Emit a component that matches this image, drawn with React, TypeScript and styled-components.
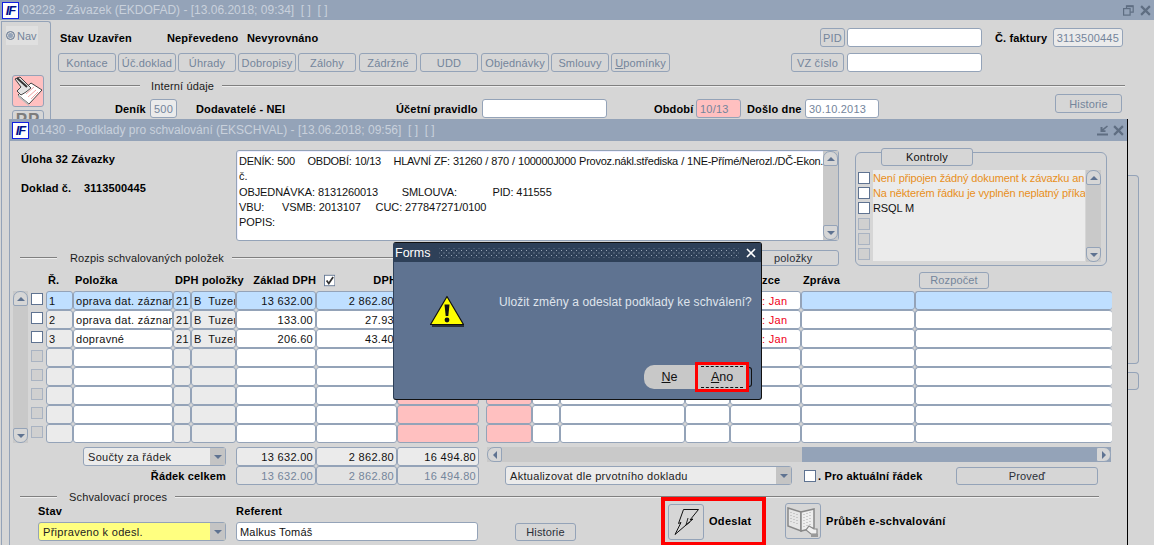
import React from "react";
import styled, { createGlobalStyle } from "styled-components";

const slate = "#94a3b8";

const GlobalStyle = createGlobalStyle`
  html, body { margin: 0; padding: 0; background: #d6d6d6; }
  body { font-family: "Liberation Sans", Arial, sans-serif; font-size: 11px; color: #000; }
  * { box-sizing: border-box; }
`;

const Screen = styled.div`
  position: relative;
  width: 1154px;
  height: 545px;
  overflow: hidden;
  background: #d6d6d6;
`;

/* window chrome */
const TitleBar = styled.div<{ $h: number }>`
  height: ${(p) => p.$h}px;
  background: ${slate};
  display: flex;
  align-items: center;
  padding: 0 3px 0 2px;
  flex: none;
`;
const Logo = styled.span`
  width: 17px;
  height: 17px;
  border: 1px solid #1020e0;
  background: #fff;
  color: #00108a;
  font: italic bold 13px/15px "Liberation Sans", sans-serif;
  letter-spacing: -1px;
  text-align: center;
  overflow: hidden;
  flex: none;
`;
const TitleText = styled.span`
  margin-left: 3px;
  color: #c9d1dc;
  font-size: 12px;
  white-space: pre;
  flex: 1;
`;
const WinIcons = styled.span<{ $gap: number }>`
  display: flex;
  gap: ${(p) => p.$gap}px;
  align-items: center;
`;

const OuterBody = styled.div`
  display: flex;
  height: 525px;
`;
const NavPanel = styled.div`
  width: 50px;
  margin: 1px 0 0 1px;
  border: 1px solid ${slate};
  border-bottom: none;
  border-radius: 0 3px 0 0;
  flex: none;
`;
const NavToggle = styled.div`
  width: 32px;
  height: 19px;
  margin: 4px 0 0 4px;
  background: #e0e0e0;
  display: flex;
  align-items: center;
  gap: 2px;
  color: #74859b;
`;
const Radio = styled.span`
  width: 9px;
  height: 9px;
  border-radius: 50%;
  background: ${slate};
  border: 1px solid #6f7f96;
  box-shadow: inset 0 0 0 1px #d6d6d6;
  flex: none;
`;
const NavIcon = styled.div<{ $pink?: boolean }>`
  width: 32px;
  height: 32px;
  margin: ${(p) => (p.$pink ? "30px" : "3px")} 0 0 10px;
  border: 1px solid ${slate};
  border-radius: 3px;
  background: ${(p) => (p.$pink ? "#ffc0c0" : "#d6d6d6")};
  color: #7d7d7d;
  font: bold 17px/18px "Liberation Sans", sans-serif;
  text-align: center;
  letter-spacing: 1px;
  overflow: hidden;
`;
const OuterForm = styled.div`
  width: 1076px;
  padding: 8px 2px 0 9px;
  flex: none;
`;
const FormRow = styled.div<{ $mt?: number; $h?: number; $ml?: number }>`
  display: flex;
  align-items: center;
  height: ${(p) => p.$h ?? 19}px;
  margin-top: ${(p) => p.$mt ?? 0}px;
  margin-left: ${(p) => p.$ml ?? 0}px;
`;
const Label = styled.span<{ $w?: number; $ml?: number; $normal?: boolean }>`
  width: ${(p) => (p.$w ? `${p.$w}px` : "auto")};
  margin-left: ${(p) => p.$ml ?? 0}px;
  font-weight: ${(p) => (p.$normal ? 400 : 700)};
  letter-spacing: 0.15px;
  white-space: pre;
  flex: none;
`;
const Btn = styled.div<{ $w: number; $h?: number; $ml?: number; $mt?: number; $dark?: boolean; $align?: string }>`
  width: ${(p) => p.$w}px;
  height: ${(p) => p.$h ?? 19}px;
  margin-left: ${(p) => p.$ml ?? 0}px;
  margin-top: ${(p) => p.$mt ?? 0}px;
  border: 1px solid ${slate};
  border-radius: 3px;
  color: ${(p) => (p.$dark ? "#2a2f38" : "#74859b")};
  font-weight: 400;
  display: flex;
  align-items: center;
  justify-content: ${(p) => p.$align ?? "center"};
  white-space: pre;
  letter-spacing: 0.15px;
  flex: none;
  u { text-underline-offset: 1px; }
`;
const Field = styled.div<{ $w: number; $bg?: string; $color?: string; $ml?: number; $right?: boolean; $h?: number }>`
  width: ${(p) => p.$w}px;
  height: ${(p) => p.$h ?? 19}px;
  margin-left: ${(p) => p.$ml ?? 0}px;
  border: 1px solid ${slate};
  border-radius: 3px;
  background: ${(p) => p.$bg ?? "#fff"};
  color: ${(p) => p.$color ?? "#74859b"};
  display: flex;
  align-items: center;
  justify-content: ${(p) => (p.$right ? "flex-end" : "flex-start")};
  padding: 0 3px;
  letter-spacing: 0.2px;
  white-space: pre;
  flex: none;
`;
const Section = styled.div<{ $h: number; $lead: number; $mb?: number }>`
  display: flex;
  align-items: center;
  height: ${(p) => p.$h}px;
  margin-bottom: ${(p) => p.$mb ?? 0}px;
  padding-left: ${(p) => p.$lead}px;
`;
const Rule = styled.span<{ $w?: number }>`
  height: 1px;
  background: #808080;
  border-bottom: 1px solid #eee;
  box-sizing: content-box;
  width: ${(p) => (p.$w ? `${p.$w}px` : "auto")};
  flex: ${(p) => (p.$w ? "none" : "1")};
`;
const SectionText = styled.span<{ $gap: number }>`
  margin: 0 8px 0 ${(p) => p.$gap}px;
  letter-spacing: 0.15px;
  color: #1a1a1a;
`;
const RuleEnd = styled.span`
  width: 28px;
  flex: none;
`;
const RightStrip = styled.div`
  flex: none;
  width: 26px;
  padding: 155px 14px 0 1px;
`;
const StubBox = styled.div<{ $h: number; $mt?: number }>`
  height: ${(p) => p.$h}px;
  margin-top: ${(p) => p.$mt ?? 0}px;
  border: 1px solid ${slate};
  border-left: none;
  border-radius: 0 4px 4px 0;
  background: #d0d0d0;
`;

/* inner window */
const InnerWindow = styled.div`
  position: absolute;
  left: 9px;
  top: 119px;
  width: 1119px;
  height: 426px;
  background: #d6d6d6;
  border-left: 1px solid ${slate};
  border-right: 1px solid #000;
  display: flex;
  flex-direction: column;
`;
const TopArea = styled.div`
  display: flex;
  padding-top: 7px;
  height: 125px;
  flex: none;
`;
const TopLeft = styled.div`
  width: 845px;
  flex: none;
  padding-right: 16px;
`;
const TopRow = styled.div`
  display: flex;
  height: 93px;
  margin-bottom: 8px;
`;
const InfoCol = styled.div`
  width: 226px;
  padding: 4px 0 0 11px;
  flex: none;
`;
const InfoLine = styled.div<{ $mt?: number }>`
  display: flex;
  height: 14px;
  align-items: center;
  margin-top: ${(p) => p.$mt ?? 0}px;
`;
const TextPane = styled.div`
  width: 603px;
  height: 91px;
  margin-top: 2px;
  border: 1px solid ${slate};
  border-radius: 3px;
  background: #fff;
  display: flex;
  flex: none;
  box-shadow: inset 1px 1px 0 #eef;
`;
const PaneText = styled.div`
  flex: 1;
  padding: 3px 0 0 2px;
  line-height: 15.3px;
  letter-spacing: -0.1px;
  white-space: pre;
  overflow: hidden;
  color: #111;
`;
const PaneFirstLine = styled.span`
  letter-spacing: -0.27px;
  word-spacing: 0.4px;
`;
const VScroll = styled.div<{ $w?: number }>`
  width: ${(p) => p.$w ?? 15}px;
  background: #c9c9c9;
  display: flex;
  flex-direction: column;
  justify-content: space-between;
  flex: none;
`;
const ArrowBtn = styled.div<{ $dir: "up" | "down" | "left" | "right" }>`
  width: 15px;
  height: 15px;
  border: 1px solid ${slate};
  border-radius: ${(p) =>
    p.$dir === "up" ? "7px 7px 2px 2px" : p.$dir === "down" ? "2px 2px 7px 7px" : p.$dir === "left" ? "7px 2px 2px 7px" : "2px 7px 7px 2px"};
  background: #d6d6d6;
  display: flex;
  align-items: center;
  justify-content: center;
  flex: none;
  &::after {
    content: "";
    border-style: solid;
    border-color: transparent;
    ${(p) =>
      p.$dir === "up"
        ? "border-width: 0 4px 4px; border-bottom-color: #5f7391;"
        : p.$dir === "down"
          ? "border-width: 4px 4px 0; border-top-color: #5f7391;"
          : p.$dir === "left"
            ? "border-width: 4px 4px 4px 0; border-right-color: #5f7391;"
            : "border-width: 4px 0 4px 4px; border-left-color: #5f7391;"}
  }
`;
const KontrolyGroup = styled.div`
  position: relative;
  width: 252px;
  height: 114px;
  margin-top: 4px;
  border: 1px solid ${slate};
  border-radius: 6px;
  display: flex;
  padding: 17px 5px 3px 2px;
  flex: none;
`;
const KontrolyBtn = styled.div`
  position: absolute;
  left: 25px;
  top: -5px;
  width: 92px;
  height: 18px;
  background: #d6d6d6;
  border: 1px solid ${slate};
  border-radius: 3px;
  display: flex;
  align-items: center;
  justify-content: center;
  color: #111;
  letter-spacing: 0.2px;
`;
const KontrolyList = styled.div`
  flex: 1;
  display: grid;
  grid-auto-rows: 15.2px;
`;
const KontrolyRow = styled.div`
  display: flex;
  gap: 3px;
  height: 15.2px;
`;
const Check = styled.span<{ $off?: boolean; $on?: boolean }>`
  width: 12px;
  height: 12px;
  margin-top: 2px;
  background: ${(p) => (p.$off ? "#d0d0d0" : "#fff")};
  border: 1px solid ${(p) => (p.$off ? "#a9b3c2" : "#5f7391")};
  display: flex;
  flex: none;
`;
const KontrolyText = styled.span<{ $warn?: boolean }>`
  width: 212px;
  background: #ebebeb;
  color: ${(p) => (p.$warn ? "#e88f22" : "#111")};
  letter-spacing: -0.13px;
  white-space: pre;
  overflow: hidden;
  line-height: 16px;
  flex: none;
`;

/* table */
const COLS = [27, 100, 18, 45, 80, 81, 82, 7, 46, 28, 125, 45, 71, 114, 197];
const TableArea = styled.div`
  display: flex;
  padding: 0 0 0 3px;
  height: 177px;
  flex: none;
`;
const TableSide = styled.div`
  width: 33px;
  padding-top: 25px;
  display: flex;
  gap: 3px;
  flex: none;
`;
const SideChecks = styled.div`
  display: grid;
  grid-auto-rows: 19px;
  width: 12px;
`;
const HeadRow = styled.div`
  display: grid;
  grid-template-columns: ${COLS.map((c) => `${c}px`).join(" ")};
  height: 25px;
  align-items: center;
  padding-top: 3px;
`;
const HeadCell = styled.span<{ $right?: boolean; $pad?: number; $wide?: boolean }>`
  font-weight: 700;
  letter-spacing: 0.15px;
  white-space: pre;
  padding-left: ${(p) => p.$pad ?? 2}px;
  display: flex;
  align-items: center;
  gap: 4px;
  justify-content: ${(p) => (p.$right ? "flex-end" : "flex-start")};
  ${(p) => (p.$wide ? "grid-column: 3 / 5;" : "")}
`;
const DphHead = styled.span`
  margin-left: 34px;
`;
const Grid = styled.div`
  display: grid;
  grid-template-columns: ${COLS.map((c) => `${c}px`).join(" ")};
  grid-auto-rows: 19px;
`;
const Cell = styled.div<{ $bg?: string; $right?: boolean; $none?: boolean; $open?: boolean; $color?: string; $pad?: number }>`
  border: ${(p) => (p.$none ? "none" : `1px solid ${slate}`)};
  ${(p) => (p.$open ? "border-right: none;" : "")}
  border-radius: 3px;
  background: ${(p) => (p.$none ? "transparent" : p.$bg ?? "#fff")};
  color: ${(p) => p.$color ?? "#111"};
  display: flex;
  align-items: center;
  justify-content: ${(p) => (p.$right ? "flex-end" : "flex-start")};
  padding: 0 2px 0 ${(p) => p.$pad ?? 2}px;
  letter-spacing: 0.3px;
  white-space: pre;
  overflow: hidden;
`;

/* totals */
const TotalsArea = styled.div`
  display: flex;
  margin-top: 4px;
  height: 38px;
  flex: none;
`;
const TotalsLeft = styled.div`
  width: 469px;
  flex: none;
`;
const TotalsRow = styled.div`
  display: flex;
  align-items: center;
  height: 19px;
  justify-content: flex-end;
`;
const TotalField = styled.div<{ $w: number; $dim?: boolean; $first?: boolean }>`
  width: ${(p) => p.$w}px;
  height: 19px;
  margin-left: ${(p) => (p.$first ? 10 : 0)}px;
  border: 1px solid ${slate};
  border-radius: 3px;
  background: ${(p) => (p.$dim ? "#e2e2e2" : "#ebebeb")};
  color: ${(p) => (p.$dim ? "#74859b" : "#111")};
  display: flex;
  align-items: center;
  justify-content: flex-end;
  padding-right: 2px;
  letter-spacing: 0.3px;
  flex: none;
`;
const TotalsRight = styled.div`
  width: 624px;
  margin-left: 8px;
  flex: none;
`;
const HScroll = styled.div`
  height: 15px;
  background: ${slate};
  display: flex;
  justify-content: space-between;
`;
const HThumb = styled.div`
  display: flex;
  width: 315px;
  background: #c9c9c9;
`;
const SelectBox = styled.div<{ $w: number; $bg?: string; $ml?: number; $color?: string }>`
  width: ${(p) => p.$w}px;
  height: 19px;
  margin-left: ${(p) => p.$ml ?? 0}px;
  border: 1px solid ${slate};
  border-radius: 3px;
  background: ${(p) => p.$bg ?? "#ebebeb"};
  display: flex;
  align-items: center;
  justify-content: space-between;
  padding-left: 4px;
  letter-spacing: 0.3px;
  color: ${(p) => p.$color ?? "#222"};
  white-space: pre;
  flex: none;
`;
const SelectDrop = styled.span`
  width: 15px;
  height: 100%;
  background: #c4c4c4;
  display: flex;
  align-items: center;
  justify-content: center;
  &::after {
    content: "";
    border-style: solid;
    border-width: 4px 4px 0;
    border-color: #5f7391 transparent transparent;
  }
`;
const ActionRow = styled.div`
  display: flex;
  align-items: center;
  height: 19px;
  margin-top: 4px;
`;
const ActionCheck = styled(Check)`
  margin: 0 0 0 12px;
`;

/* bottom */
const BottomRow = styled.div`
  display: flex;
  align-items: flex-start;
  flex: 1;
`;
const StackCol = styled.div<{ $w: number; $ml: number }>`
  width: ${(p) => p.$w}px;
  margin-left: ${(p) => p.$ml}px;
  padding-top: 7px;
  flex: none;
`;
const StackLabel = styled.div`
  font-weight: 700;
  letter-spacing: 0.2px;
  height: 18px;
  line-height: 14px;
`;
const RedBox = styled.div`
  width: 105px;
  height: 48px;
  margin-left: 85px;
  border: 4px solid #f00;
  border-bottom-width: 3px;
  display: flex;
  align-items: center;
  padding-left: 3px;
  flex: none;
`;
const IconBtn = styled.div<{ $ml?: number; $mt?: number }>`
  width: 36px;
  height: 36px;
  margin-left: ${(p) => p.$ml ?? 0}px;
  margin-top: ${(p) => p.$mt ?? 0}px;
  border: 1px solid ${slate};
  border-radius: 3px;
  display: flex;
  align-items: center;
  justify-content: center;
  flex: none;
`;
const BtnCaption = styled.span<{ $mt?: number }>`
  font-weight: 700;
  letter-spacing: 0.3px;
  margin-left: 5px;
  margin-top: ${(p) => p.$mt ?? 0}px;
  white-space: pre;
  flex: none;
`;

/* dialog */
const Dialog = styled.div`
  position: absolute;
  left: 393px;
  top: 242px;
  width: 369px;
  height: 158px;
  background: #5f7391;
  border: 1px solid #111;
  border-left-color: #2e4058;
  border-radius: 3px;
  display: flex;
  flex-direction: column;
`;
const DialogBar = styled.div`
  height: 19px;
  background: #2e4058;
  display: flex;
  align-items: center;
  padding: 0 0 0 1px;
  color: #fff;
  font-size: 12.5px;
`;
const DotStrip = styled.span`
  width: 300px;
  height: 10px;
  margin: 0 7px 0 9px;
  background-image: radial-gradient(#9aa7b8 0.7px, transparent 0.9px), radial-gradient(#9aa7b8 0.7px, transparent 0.9px);
  background-size: 5px 5px;
  background-position: 0 0, 2.5px 2.5px;
  flex: none;
`;
const DialogBody = styled.div`
  display: flex;
  height: 58px;
  padding: 33px 0 0 35px;
  flex: none;
`;
const DialogMsg = styled.div`
  margin: 0 0 0 34px;
  color: #dfe4ec;
  font-size: 12px;
  letter-spacing: 0.09px;
  white-space: pre;
`;
const DialogBtns = styled.div`
  display: flex;
  align-items: center;
  margin: 42px 0 0 250px;
  height: 30px;
  position: relative;
`;
const PillNe = styled.div`
  width: 51px;
  height: 24px;
  background: #c8c8c8;
  border-radius: 10px 0 0 10px;
  display: flex;
  align-items: center;
  justify-content: center;
  font-size: 12.5px;
  color: #111;
`;
const AnoFrame = styled.div`
  width: 54px;
  height: 30px;
  border: 3px solid #f00;
  background: #c8c8c8;
  display: flex;
  align-items: center;
  justify-content: center;
  font-size: 12.5px;
  color: #111;
  position: relative;
  &::before {
    content: "";
    position: absolute;
    left: 3px;
    right: 3px;
    top: 1px;
    bottom: 1px;
    border-top: 1px dashed #111;
    border-bottom: 1px dashed #111;
  }
`;
const PillEnd = styled.span`
  width: 3px;
  height: 20px;
  border: 1px solid #111;
  border-left: none;
  border-radius: 0 4px 4px 0;
  flex: none;
`;

const Close: React.FC<{ size: number; color: string; w?: number }> = ({ size, color, w = 2 }) => (
  <svg width={size} height={size} viewBox="0 0 10 10" style={{ flex: "none" }}>
    <path d="M1 1L9 9M9 1L1 9" stroke={color} strokeWidth={w} fill="none" />
  </svg>
);

const Restore = () => (
  <svg width="11" height="11" viewBox="0 0 11 11" fill="none" stroke="#5f6e82" strokeWidth="1.2">
    <rect x="0.6" y="3.6" width="6.5" height="6.5" />
    <path d="M3.5 3.5V0.8H10.2V7.2H7.2" />
    <path d="M3.5 1.4H10" strokeWidth="1.6" />
  </svg>
);

const Minimize = () => (
  <svg width="11" height="11" viewBox="0 0 11 11" fill="#5f6e82">
    <rect x="0" y="8.5" width="11" height="2" />
    <path d="M10 0.5L5.5 4V2H3.5V7H8.5V5.2H6.5L11 1.5Z" />
  </svg>
);

const NoteIcon = () => (
  <svg width="30" height="30" viewBox="0 0 30 30">
    <path d="M5 19L18 7L29 14L16 28Z" fill="#fff" stroke="#444" strokeWidth="1" />
    <path d="M5 19L16 28L16 30L5 21Z" fill="#bbb" />
    <path d="M13 18L21 11M15 21L23 14M18 23L25 16" stroke="#e99" strokeWidth="0.9" />
    <path d="M2 3L7 1L18 12L13 16L8 19L4 15L8 11Z" fill="#e4e4e4" stroke="#333" strokeWidth="0.9" />
    <path d="M4 2L14 11" stroke="#333" strokeWidth="2" />
  </svg>
);

const BoltIcon = () => (
  <svg width="34" height="34" viewBox="0 0 34 34" fill="none" stroke="#111" strokeWidth="1">
    <path d="M14.5 4.5H29.5L21 15L24 14L6 29.5L12 17.5L9.5 18.5Z" />
    <path d="M19 13L17 20L21 17" strokeWidth="0.9" />
  </svg>
);

const BookIcon = () => (
  <svg width="34" height="34" viewBox="0 0 34 34">
    <path d="M2 4L15 8V27L2 22Z" fill="#e6e6e6" stroke="#888" strokeWidth="1.5" />
    <path d="M15 8L28 5V24L15 27Z" fill="#eee" stroke="#888" strokeWidth="1.5" />
    <path d="M5 8V20M8 9V21M11 10V22M18 10V23M21 9V22M24 8V21" stroke="#aaa" strokeWidth="1" strokeDasharray="1 2" />
    <path d="M23 22L28 25L31 25V30H25L20 26Z" fill="#f0f0f0" stroke="#888" strokeWidth="1.2" />
    <rect x="25" y="30" width="7" height="3" fill="#999" />
  </svg>
);

const WarningIcon = () => (
  <svg width="36" height="32" viewBox="0 0 36 32">
    <path d="M18 1.5L34.5 29.5H1.5Z" fill="#ffff00" stroke="#111" strokeWidth="1.2" strokeLinejoin="round" />
    <path d="M3 31H35" stroke="#111" strokeWidth="1.4" />
    <path d="M15.5 9.5H20.5L19.3 21H16.7Z" fill="#111" />
    <circle cx="18" cy="25" r="2.4" fill="#111" />
  </svg>
);

const TickBox = () => (
  <svg width="13" height="13" viewBox="0 0 13 13">
    <rect x="0.5" y="0.5" width="12" height="12" fill="#fff" stroke="#5f7391" />
    <path d="M3 6.5L5.5 10L10.5 2.5" fill="none" stroke="#333" strokeWidth="2" />
  </svg>
);

type Row = { r: string; item: string; sazba: string; typ: string; zaklad: string; dph: string; celkem: string };

const rows: (Row | null)[] = [
  { r: "1", item: "oprava dat. záznam", sazba: "21", typ: "B  Tuzer", zaklad: "13 632.00", dph: "2 862.80", celkem: "16 494.80" },
  { r: "2", item: "oprava dat. záznam", sazba: "21", typ: "B  Tuzer", zaklad: "133.00", dph: "27.93", celkem: "160.93" },
  { r: "3", item: "dopravné", sazba: "21", typ: "B  Tuzer", zaklad: "206.60", dph: "43.40", celkem: "250.00" },
  null,
  null,
  null,
  null,
  null,
];

const toolbar = [
  { text: "Kontace", w: 58, gap: 0 },
  { text: "Úč.doklad", w: 58, gap: 2 },
  { text: "Úhrady", w: 58, gap: 2 },
  { text: "Dobropisy", w: 58, gap: 2 },
  { text: "Zálohy", w: 58, gap: 2 },
  { text: "Zádržné", w: 58, gap: 3 },
  { text: "UDD", w: 58, gap: 3 },
  { text: "Objednávky", w: 68, gap: 3 },
  { text: "Smlouvy", w: 58, gap: 2 },
];

const App: React.FC = () => {
  return (
    <Screen>
      <GlobalStyle />
      <TitleBar $h={20}>
        <Logo>IF</Logo>
        <TitleText>03228 - Závazek (EKDOFAD) - [13.06.2018; 09:34]  [ ]  [ ]</TitleText>
        <WinIcons $gap={6}>
          <Restore />
          <Close size={11} color="#5f6e82" />
        </WinIcons>
      </TitleBar>
      <OuterBody>
        <NavPanel>
          <NavToggle>
            <Radio />
            Nav
          </NavToggle>
          <NavIcon $pink>
            <NoteIcon />
          </NavIcon>
          <NavIcon>PP</NavIcon>
        </NavPanel>
        <OuterForm>
          <FormRow>
            <Label $w={28}>Stav</Label>
            <Label $w={79}>Uzavřen</Label>
            <Label $w={80}>Nepřevedeno</Label>
            <Label $w={573}>Nevyrovnáno</Label>
            <Btn $w={25}>PID</Btn>
            <Field $w={135} $ml={2} />
            <Label $w={58} $ml={13}>Č. faktury</Label>
            <Field $w={70} $bg="#ebebeb" $right>3113500445</Field>
          </FormRow>
          <FormRow $mt={6} $ml={-2}>
            {toolbar.map((b) => (
              <Btn key={b.text} $w={b.w} $ml={b.gap}>{b.text}</Btn>
            ))}
            <Btn $w={59} $ml={2}><span><u>U</u>pomínky</span></Btn>
            <Btn $w={53} $ml={121}>VZ číslo</Btn>
            <Field $w={135} $ml={3} />
          </FormRow>
          <Section $h={27} $lead={0}>
            <Rule $w={80} />
            <SectionText $gap={11}>Interní údaje</SectionText>
            <Rule />
          </Section>
          <FormRow>
            <Label $w={35} $ml={55}>Deník</Label>
            <Field $w={27} $bg="#ebebeb">500</Field>
            <Label $w={200} $ml={19}>Dodavatelé - NEI</Label>
            <Label $w={86}>Účetní pravidlo</Label>
            <Field $w={125} />
            <Label $w={42} $ml={47}>Období</Label>
            <Field $w={45} $bg="#ffc0c0">10/13</Field>
            <Label $w={58} $ml={6}>Došlo dne</Label>
            <Field $w={74}>30.10.2013</Field>
            <Btn $w={67} $ml={176} $mt={-10}>Historie</Btn>
          </FormRow>
        </OuterForm>
        <RightStrip>
          <StubBox $h={189} />
          <StubBox $h={18} $mt={8} />
        </RightStrip>
      </OuterBody>

      <InnerWindow>
        <TitleBar $h={22}>
          <Logo>IF</Logo>
          <TitleText>01430 - Podklady pro schvalování (EKSCHVAL) - [13.06.2018; 09:56]  [ ]  [ ]</TitleText>
          <WinIcons $gap={5}>
            <Minimize />
            <Close size={11} color="#5f6e82" />
          </WinIcons>
        </TitleBar>

        <TopArea>
          <TopLeft>
            <TopRow>
              <InfoCol>
                <InfoLine><Label>Úloha 32 Závazky</Label></InfoLine>
                <InfoLine $mt={15}>
                  <Label $w={63}>Doklad č.</Label>
                  <Label>3113500445</Label>
                </InfoLine>
              </InfoCol>
              <TextPane>
                <PaneText>
                  <PaneFirstLine>DENÍK: 500    OBDOBÍ: 10/13    HLAVNÍ ZF: 31260 / 870 / 100000J000 Provoz.nákl.střediska / 1NE-Přímé/Nerozl./DČ-Ekon.</PaneFirstLine>
                  {"\nč.\nOBJEDNÁVKA: 8131260013        SMLOUVA:            PID: 411555\nVBU:      VSMB: 2013107     CUC: 277847271/0100\nPOPIS:"}
                </PaneText>
                <VScroll>
                  <ArrowBtn $dir="up" />
                  <ArrowBtn $dir="down" />
                </VScroll>
              </TextPane>
            </TopRow>
            <Section $h={18} $lead={10}>
              <Rule $w={37} />
              <SectionText $gap={13}>Rozpis schvalovaných položek</SectionText>
              <Rule />
              <Btn $w={140} $h={16} $dark $align="flex-end">položky        </Btn>
            </Section>
          </TopLeft>
          <KontrolyGroup>
            <KontrolyBtn>Kontroly</KontrolyBtn>
            <KontrolyList>
              <KontrolyRow><Check /><KontrolyText $warn>Není připojen žádný dokument k závazku an</KontrolyText></KontrolyRow>
              <KontrolyRow><Check /><KontrolyText $warn>Na některém řádku je vyplněn neplatný příka</KontrolyText></KontrolyRow>
              <KontrolyRow><Check /><KontrolyText>RSQL M</KontrolyText></KontrolyRow>
              <KontrolyRow><Check $off /><KontrolyText /></KontrolyRow>
              <KontrolyRow><Check $off /><KontrolyText /></KontrolyRow>
              <KontrolyRow><Check $off /><KontrolyText /></KontrolyRow>
            </KontrolyList>
            <VScroll>
              <ArrowBtn $dir="up" />
              <ArrowBtn $dir="down" />
            </VScroll>
          </KontrolyGroup>
        </TopArea>

        <TableArea>
          <TableSide>
            <VScroll>
              <ArrowBtn $dir="up" />
              <ArrowBtn $dir="down" />
            </VScroll>
            <SideChecks>
              {rows.map((row, i) => (
                <Check key={i} $off={!row} />
              ))}
            </SideChecks>
          </TableSide>
          <div>
            <HeadRow>
              <HeadCell>Ř.</HeadCell>
              <HeadCell>Položka</HeadCell>
              <HeadCell $wide>DPH položky</HeadCell>
              <HeadCell $right>Základ DPH</HeadCell>
              <HeadCell $pad={8}>
                <TickBox />
                <DphHead>DPH</DphHead>
              </HeadCell>
              <HeadCell />
              <HeadCell />
              <HeadCell />
              <HeadCell />
              <HeadCell />
              <HeadCell />
              <HeadCell $pad={32}>zce</HeadCell>
              <HeadCell>Zpráva</HeadCell>
              <HeadCell $pad={4}>
                <Btn $w={70} $h={17}>Rozpočet</Btn>
              </HeadCell>
            </HeadRow>
            <Grid>
              {rows.map((row, i) => {
                const sel = i === 0 ? "#bfdfff" : undefined;
                const grey = sel ?? "#ebebeb";
                const white = sel ?? "#fff";
                return (
                  <React.Fragment key={i}>
                    <Cell $bg={grey}>{row?.r}</Cell>
                    <Cell $bg={white}>{row?.item}</Cell>
                    <Cell $bg={grey}>{row?.sazba}</Cell>
                    <Cell $bg={grey}>{row?.typ}</Cell>
                    <Cell $bg={white} $right>{row?.zaklad}</Cell>
                    <Cell $bg={white} $right>{row?.dph}</Cell>
                    <Cell $bg="#ffc0c0" $right>{row?.celkem}</Cell>
                    <Cell $none />
                    <Cell $bg="#ffc0c0" />
                    <Cell />
                    <Cell />
                    <Cell />
                    <Cell $color="#f00020" $pad={31}>{row ? ": Jan" : ""}</Cell>
                    <Cell $bg={white} />
                    <Cell $bg={white} $open />
                  </React.Fragment>
                );
              })}
            </Grid>
          </div>
        </TableArea>

        <TotalsArea>
          <TotalsLeft>
            <TotalsRow>
              <SelectBox $w={143}>Součty za řádek<SelectDrop /></SelectBox>
              <TotalField $w={80} $first>13 632.00</TotalField>
              <TotalField $w={81}>2 862.80</TotalField>
              <TotalField $w={82}>16 494.80</TotalField>
            </TotalsRow>
            <TotalsRow>
              <Label>Řádek celkem</Label>
              <TotalField $w={80} $dim $first>13 632.00</TotalField>
              <TotalField $w={81} $dim>2 862.80</TotalField>
              <TotalField $w={82} $dim>16 494.80</TotalField>
            </TotalsRow>
          </TotalsLeft>
          <TotalsRight>
            <HScroll>
              <HThumb>
                <ArrowBtn $dir="left" />
              </HThumb>
              <ArrowBtn $dir="right" />
            </HScroll>
            <ActionRow>
              <SelectBox $w={287} $ml={18}>Aktualizovat dle prvotního dokladu<SelectDrop /></SelectBox>
              <ActionCheck />
              <Label $w={138} $ml={2}>. Pro aktuální řádek</Label>
              <Btn $w={142} $h={18} $dark>Proveď</Btn>
            </ActionRow>
          </TotalsRight>
        </TotalsArea>

        <Section $h={24} $lead={10} $mb={-11}>
          <Rule $w={37} />
          <SectionText $gap={12}>Schvalovací proces</SectionText>
          <Rule />
          <RuleEnd />
        </Section>

        <BottomRow>
          <StackCol $w={188} $ml={28}>
            <StackLabel>Stav</StackLabel>
            <SelectBox $w={188} $bg="#ffff80">Připraveno k odesl.<SelectDrop /></SelectBox>
          </StackCol>
          <StackCol $w={242} $ml={10}>
            <StackLabel>Referent</StackLabel>
            <Field $w={242} $color="#111">Malkus Tomáš</Field>
          </StackCol>
          <Btn $w={61} $h={18} $ml={37} $mt={26} $dark>Historie</Btn>
          <RedBox>
            <IconBtn>
              <BoltIcon />
            </IconBtn>
            <BtnCaption $mt={-2}>Odeslat</BtnCaption>
          </RedBox>
          <IconBtn $ml={19} $mt={6}>
            <BookIcon />
          </IconBtn>
          <BtnCaption $mt={18}>Průběh e-schvalování</BtnCaption>
        </BottomRow>
      </InnerWindow>

      <Dialog>
        <DialogBar>
          Forms
          <DotStrip />
          <Close size={10} color="#fff" w={1.6} />
        </DialogBar>
        <DialogBody>
          <WarningIcon />
          <DialogMsg>Uložit změny a odeslat podklady ke schválení?</DialogMsg>
        </DialogBody>
        <DialogBtns>
          <PillNe><span><u>N</u>e</span></PillNe>
          <AnoFrame><span><u>A</u>no</span></AnoFrame>
          <PillEnd />
        </DialogBtns>
      </Dialog>
    </Screen>
  );
};

export default App;
